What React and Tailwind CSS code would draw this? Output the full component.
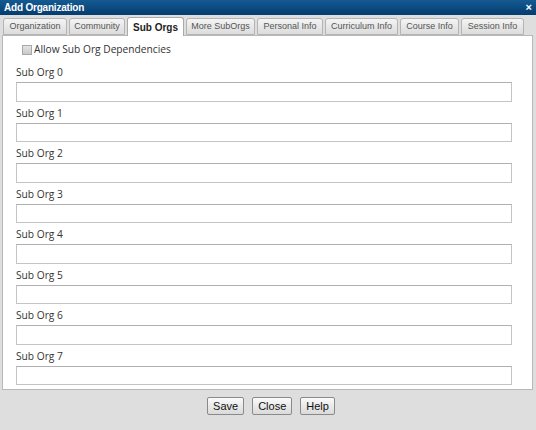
import React from "react";

const tabs = [
  { label: "Organization", w: "w-[64px]" },
  { label: "Community", w: "w-[56px]" },
  { label: "Sub Orgs", w: "w-[57px]", active: true },
  { label: "More SubOrgs", w: "w-[69px]" },
  { label: "Personal Info", w: "w-[66px]" },
  { label: "Curriculum Info", w: "w-[73px]" },
  { label: "Course Info", w: "w-[59px]" },
  { label: "Session Info", w: "w-[63px]" },
];

function App() {
  return (
    <div className="w-[536px] h-[430px] bg-[#dedede] flex flex-col font-['Liberation_Sans',Arial,sans-serif] overflow-hidden">
      {/* Title bar */}
      <div className="h-[15px] bg-gradient-to-b from-[#145a92] to-[#063c6e] flex items-center justify-between pl-[4px] pr-[4px]">
        <span className="text-white text-[10px] font-bold leading-none tracking-[-0.2px]">Add Organization</span>
        <span className="text-white text-[11px] font-bold leading-none">×</span>
      </div>

      {/* Tabs */}
      <div className="flex items-end gap-[2px] pl-[3px] pt-[2px] h-[20px] relative z-10">
        {tabs.map((t) =>
          t.active ? (
            <div
              key={t.label}
              className={`${t.w} h-[19px] bg-white border border-b-0 border-[#aaaaaa] rounded-t-[3px] flex items-center justify-center text-[10px] font-bold text-[#222] -mb-[1px]`}
            >
              {t.label}
            </div>
          ) : (
            <div
              key={t.label}
              className={`${t.w} h-[17px] bg-gradient-to-b from-[#f4f4f4] to-[#dcdcdc] border border-[#b4b4b4] rounded-t-[3px] flex items-center justify-center text-[9px] text-[#555]`}
            >
              {t.label}
            </div>
          )
        )}
      </div>

      {/* Panel */}
      <div className="ml-[2px] mr-[3px] h-[355px] bg-white border border-[#b8b8b8] pl-[13px] pr-[20px] font-['Open_Sans',sans-serif]">
        <div className="flex items-center h-[26px] pl-[6px] pt-[1px]">
          <span className="w-[10px] h-[10px] border border-[#a8a8a8] bg-gradient-to-b from-[#e4e4e4] to-[#c8c8c8]" />
          <span className="ml-[2px] text-[10.2px] text-[#333]">Allow Sub Org Dependencies</span>
        </div>
        <div className="flex flex-col">
          {[0, 1, 2, 3, 4, 5, 6, 7].map((i) => (
            <div key={i} className="flex flex-col">
              <div className="h-[20px] pt-[4px] text-[10.2px] leading-[13px] text-[#333]">Sub Org {i}</div>
              <div className="h-[19.5px] border border-[#c4c4c4] border-t-[#b0b0b0] bg-white mb-[1px]" />
            </div>
          ))}
        </div>
      </div>

      {/* Buttons */}
      <div className="flex justify-center gap-[8px] pt-[7px] pl-[6px]">
        {["Save", "Close", "Help"].map((b) => (
          <button
            key={b}
            className="h-[18px] px-[5px] border border-[#8a8a8a] rounded-[2px] bg-gradient-to-b from-[#fafafa] to-[#dadada] text-[11px] leading-none text-[#111]"
          >
            {b}
          </button>
        ))}
      </div>
    </div>
  );
}

export default App;
